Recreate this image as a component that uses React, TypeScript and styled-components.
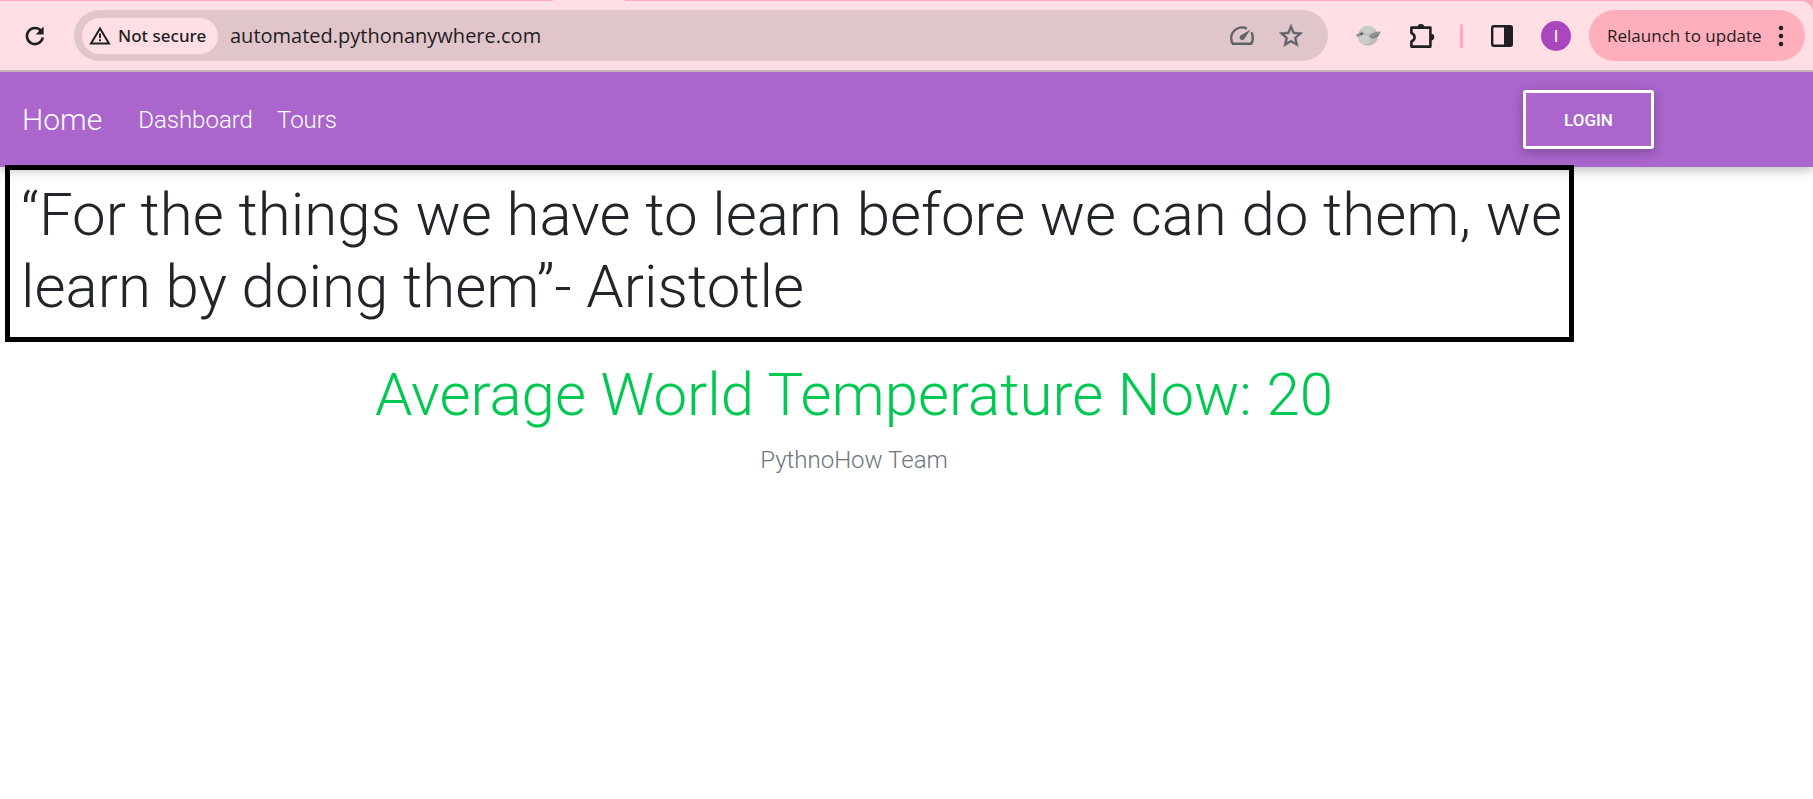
import React from "react";
import styled, { createGlobalStyle } from "styled-components";

const GlobalStyle = createGlobalStyle`
  *, *::before, *::after { box-sizing: border-box; }
  body {
    margin: 0;
    background: #fff;
    color: #212529;
    font-family: Roboto, "Liberation Sans", sans-serif;
    font-weight: 300;
    font-size: 24px;
    line-height: 36px;
  }
`;

const uiFont = `"Open Sans", "Noto Sans", sans-serif`;

const Browser = styled.header`
  background: #ffaabb;
  position: relative;
  padding-top: 1px;
`;

const ActiveTab = styled.span`
  position: absolute;
  top: 0;
  left: 553px;
  width: 72px;
  height: 1px;
  background: #ffdfe4;
`;

const Toolbar = styled.div`
  display: flex;
  align-items: center;
  height: 71px;
  padding: 0 8px 0 24px;
  background: #ffdfe4;
  border-bottom: 2px solid #ccb2b8;
  border-top-right-radius: 12px;
  font-family: ${uiFont};
  font-weight: 400;
  color: #1f2023;
`;

const IconButton = styled.button`
  display: flex;
  align-items: center;
  justify-content: center;
  flex: none;
  padding: 0;
  border: 0;
  background: none;
  color: inherit;
  svg { display: block; }
`;

const AddressBar = styled.div`
  flex: 1;
  display: flex;
  align-items: center;
  height: 51px;
  margin-left: 28px;
  padding: 0 23px 0 8px;
  gap: 12px;
  border-radius: 26px;
  background: #e0c5ca;
  color: #5f6368;
`;

const PageActions = styled.div`
  display: flex;
  align-items: center;
  gap: 22px;
`;

const SecurityChip = styled.button`
  display: flex;
  align-items: center;
  gap: 7px;
  flex: none;
  height: 36px;
  width: 136px;
  padding: 0 0 0 7px;
  border: 0;
  border-radius: 18px;
  background: #ffdfe4;
  color: #1f2023;
  font: 500 17px/24px "Noto Sans", sans-serif;
  white-space: nowrap;
`;

const UrlInput = styled.input`
  flex: 1;
  min-width: 0;
  height: 36px;
  padding: 0;
  border: 0;
  outline: 0;
  background: none;
  color: #1f2023;
  font: 400 20px/28px ${uiFont};
`;

const Extensions = styled.div`
  display: flex;
  align-items: center;
  gap: 28px;
  padding: 0 18px 0 28px;
`;

const Divider = styled.span`
  width: 3px;
  height: 24px;
  border-radius: 2px;
  background: #ffaabb;
  margin-left: -3px;
`;

const Avatar = styled.button`
  width: 30px;
  height: 30px;
  padding: 0;
  border: 0;
  border-radius: 50%;
  background: #ab47bc;
  color: #fff;
  font: 400 17px/30px Roboto, sans-serif;
`;

const UpdateButton = styled.button`
  display: flex;
  align-items: center;
  justify-content: space-between;
  flex: none;
  width: 216px;
  height: 51px;
  padding: 0 19px 0 18px;
  border: 0;
  border-radius: 26px;
  background: #ffaebb;
  color: #1f2023;
  font: 400 17px/24px ${uiFont};
  white-space: nowrap;
`;

const Navbar = styled.nav`
  display: flex;
  align-items: center;
  height: 95px;
  padding: 0 159px 0 22px;
  background: #aa66cc;
  box-shadow: 0 3px 8px rgba(0, 0, 0, 0.16), 0 3px 15px rgba(0, 0, 0, 0.12);
`;

const Brand = styled.a`
  color: #fff;
  font-size: 30px;
  line-height: 45px;
  text-decoration: none;
  margin-right: 36px;
`;

const NavLinks = styled.div`
  display: flex;
  flex: 1;
  gap: 24px;
`;

const NavLink = styled.a`
  color: #fff;
  text-decoration: none;
`;

const LoginButton = styled.button`
  width: 131px;
  height: 59px;
  border: 3px solid #fff;
  border-radius: 3px;
  background: #aa66cc;
  color: #fff;
  font: 500 17px/24px Roboto, sans-serif;
  text-transform: uppercase;
  box-shadow: 0 3px 8px rgba(0, 0, 0, 0.16), 0 3px 15px rgba(0, 0, 0, 0.12);
`;

const Quote = styled.h1`
  position: relative;
  margin: -2px 239px 17px 5px;
  padding: 9px 4px 14px 11px;
  border: 5px solid #000;
  font-size: 60px;
  font-weight: 300;
  line-height: 72px;
`;

const Summary = styled.section`
  margin-right: 105px;
  text-align: center;
`;

const Temperature = styled.h1`
  margin: 0 0 11px;
  color: #00c851;
  font-size: 60px;
  font-weight: 300;
  line-height: 72px;
`;

const Team = styled.p`
  margin: 0;
  color: #6c757d;
`;

const ReloadIcon = () => (
  <svg width="22" height="22" viewBox="0 0 22 22" fill="none" stroke="currentColor" strokeWidth="2.6">
    <path d="M18.8 12.6A8 8 0 1 1 17 5.800" />
    <path d="M19.600 1.400v8h-8z" fill="currentColor" stroke="none" />
  </svg>
);

const WarningIcon = () => (
  <svg width="22" height="19" viewBox="0 0 22 19" fill="none" stroke="currentColor" strokeWidth="2">
    <path d="M11 2.400 20 17.500H2z" />
    <path d="M11 7.500v4.500M11 13.200v2" />
  </svg>
);

const GaugeIcon = () => (
  <svg width="26" height="22" viewBox="0 0 26 22" fill="none" stroke="currentColor" strokeWidth="2.4">
    <path d="M17.800 3.600A10.800 10.800 0 0 0 2.200 13q0 3.500 1.600 5.800h18.400q1.600-2.300 1.600-5.800 0-3.200-1.400-5.800" />
    <path d="M21.500 4.500 15.200 14a2.500 2.500 0 1 1-3.500-3.500z" fill="currentColor" stroke="none" />
  </svg>
);

const StarIcon = () => (
  <svg width="28" height="28" viewBox="0 0 24 24" fill="currentColor">
    <path d="m22 9.240-7.190-.62L12 2 9.190 8.630 2 9.240l5.460 4.730L5.820 21 12 17.270 18.180 21l-1.630-7.030L22 9.240zM12 15.400l-3.760 2.270 1-4.280-3.320-2.880 4.380-.38L12 6.100l1.710 4.040 4.380.38-3.320 2.880 1 4.280L12 15.400z" stroke="currentColor" strokeWidth="0.4" />
  </svg>
);

const BirdIcon = () => (
  <svg width="25" height="22" viewBox="0 0 25 22">
    <circle cx="12" cy="11" r="10" fill="#bdbdbd" />
    <path d="M4 5a10 10 0 0 1 15.500-1q-3 5-9 4.500z" fill="#cacaca" />
    <ellipse cx="8.500" cy="14.500" rx="5.500" ry="4.800" fill="#cccccc" />
    <path d="M0 9.500 4 8l2.500 1.700-3 1.300L1 12z" fill="#929292" />
    <circle cx="5.800" cy="8.800" r="1.400" fill="#555" />
    <path d="M13 11Q18 6.500 24.800 6.500 22 14.500 15 13.200z" fill="#858585" />
    <path d="M15 11.500q4-3 8-4" stroke="#a6a6a6" fill="none" />
  </svg>
);

const PuzzleIcon = () => (
  <svg width="26" height="26" viewBox="0 0 26 26" fill="none" stroke="currentColor" strokeWidth="2.6">
    <path d="M2.400 4.600H21.400v19H2.400v-5.200q3.200-1.400 3.200-4.200t-3.200-4.200z" strokeLinejoin="round" />
    <path d="M8.500 4.500a3.400 3.400 0 0 1 6.800 0zM21.900 10.700a3.400 3.400 0 0 1 0 6.800z" fill="currentColor" stroke="none" />
  </svg>
);

const SidePanelIcon = () => (
  <svg width="22" height="22" viewBox="0 0 22 22">
    <rect x="1.200" y="1.200" width="19.600" height="19.600" rx="1.500" fill="none" stroke="currentColor" strokeWidth="2.400" />
    <path d="M13 1h8v20h-8z" fill="currentColor" />
  </svg>
);

const DotsIcon = () => (
  <svg width="10" height="24" viewBox="0 0 10 24" fill="currentColor">
    <circle cx="5" cy="4" r="2.300" />
    <circle cx="5" cy="12" r="2.300" />
    <circle cx="5" cy="20" r="2.300" />
  </svg>
);

export default function App() {
  return (
    <>
      <GlobalStyle />
      <Browser>
        <ActiveTab />
        <Toolbar>
          <IconButton aria-label="Reload"><ReloadIcon /></IconButton>
          <AddressBar>
            <SecurityChip><WarningIcon />Not secure</SecurityChip>
            <UrlInput aria-label="Address" defaultValue="automated.pythonanywhere.com" spellCheck={false} />
            <PageActions>
              <IconButton aria-label="Performance"><GaugeIcon /></IconButton>
              <IconButton aria-label="Bookmark this page"><StarIcon /></IconButton>
            </PageActions>
          </AddressBar>
          <Extensions>
            <IconButton aria-label="Bird extension"><BirdIcon /></IconButton>
            <IconButton aria-label="Extensions"><PuzzleIcon /></IconButton>
            <Divider />
            <IconButton aria-label="Side panel"><SidePanelIcon /></IconButton>
            <Avatar aria-label="Profile">I</Avatar>
          </Extensions>
          <UpdateButton>Relaunch to update<DotsIcon /></UpdateButton>
        </Toolbar>
      </Browser>
      <Navbar>
        <Brand href="#">Home</Brand>
        <NavLinks>
          <NavLink href="#dashboard">Dashboard</NavLink>
          <NavLink href="#tours">Tours</NavLink>
        </NavLinks>
        <LoginButton>Login</LoginButton>
      </Navbar>
      <main>
        <Quote>“For the things we have to learn before we can do them, we learn by doing them”- Aristotle</Quote>
        <Summary>
          <Temperature>Average World Temperature Now: 20</Temperature>
          <Team>PythnoHow Team</Team>
        </Summary>
      </main>
    </>
  );
}
